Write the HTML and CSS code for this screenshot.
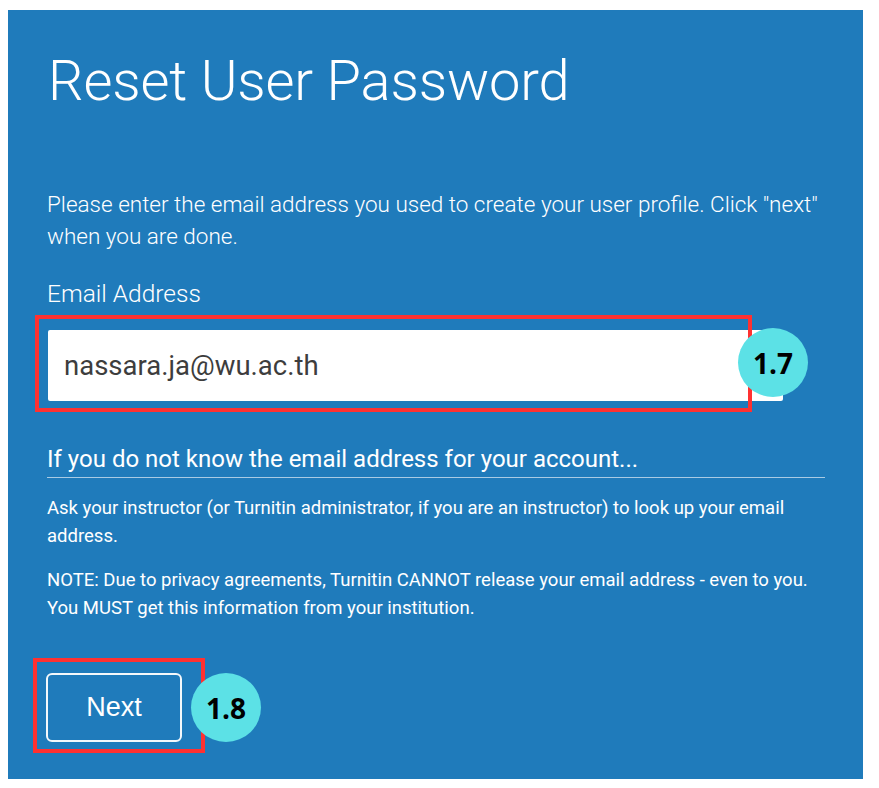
FILE: index.html
```html
<!DOCTYPE html>
<html lang="en">
<head>
<meta charset="utf-8">
<title>Reset User Password</title>
<link rel="stylesheet" href="styles.css">
</head>
<body>
<main class="panel">
  <h1 class="title">Reset User Password</h1>
  <p class="intro">Please enter the email address you used to create your user profile. Click "next" when you are done.</p>
  <label class="field-label" for="email">Email Address</label>
  <div class="field-wrap">
    <input class="field" id="email" type="text" value="nassara.ja@wu.ac.th">
    <span class="mark mark-field" aria-hidden="true"></span>
    <span class="badge badge-field">1.7</span>
  </div>
  <h2 class="subhead">If you do not know the email address for your account...</h2>
  <p class="note">Ask your instructor (or Turnitin administrator, if you are an instructor) to look up your email address.</p>
  <p class="note">NOTE: Due to privacy agreements, Turnitin CANNOT release your email address - even to you. You MUST get this information from your institution.</p>
  <div class="actions">
    <div class="btn-wrap">
      <button class="btn" type="button">Next</button>
      <span class="mark mark-btn" aria-hidden="true"></span>
    </div>
    <span class="badge badge-btn">1.8</span>
  </div>
</main>
</body>
</html>
```
FILE: styles.css
```css
html, body {
  margin: 0;
  padding: 0;
  background: #ffffff;
}

body {
  font-family: Roboto, "Liberation Sans", sans-serif;
  width: 879px;
  height: 788px;
  overflow: hidden;
}

.panel {
  box-sizing: border-box;
  margin: 10px 0 0 8px;
  width: 855px;
  height: 769px;
  background: #1f7bbb;
  color: #ffffff;
  padding: 37px 38px 0 39px;
  display: flex;
  flex-direction: column;
  align-items: flex-start;
}

.title {
  margin: 0 0 0 1px;
  font-weight: 300;
  font-size: 56px;
  line-height: 68px;
  letter-spacing: -0.15px;
}

.intro {
  margin: 73px 0 0;
  font-weight: 300;
  font-size: 22.5px;
  line-height: 32px;
  max-width: 790px;
}

.field-label {
  margin: 27px 0 0;
  font-weight: 300;
  font-size: 24.5px;
  line-height: 30px;
}

.field-wrap {
  position: relative;
  margin-top: 21px;
  margin-left: 1px;
}

.field {
  display: block;
  box-sizing: border-box;
  width: 735px;
  height: 71px;
  border: none;
  border-radius: 2px;
  background: #ffffff;
  padding: 0 16px;
  font-family: Roboto, "Liberation Sans", sans-serif;
  font-size: 27.5px;
  color: #3d3d3d;
  outline: none;
}

.mark {
  position: absolute;
  box-sizing: border-box;
  border: 4px solid #ff3131;
  pointer-events: none;
}

.mark-field {
  left: -13px;
  top: -15px;
  right: 31px;
  bottom: -11px;
}

.badge {
  width: 70px;
  height: 69px;
  border-radius: 50%;
  background: #5ce1e6;
  color: #000000;
  font-family: "Open Sans", "Noto Sans", sans-serif;
  font-weight: 700;
  font-size: 28px;
  display: flex;
  align-items: center;
  justify-content: center;
  position: relative;
  z-index: 2;
}

.badge-field {
  position: absolute;
  right: -25px;
  top: -2px;
}

.subhead {
  align-self: stretch;
  margin: 43px 0 0;
  padding-bottom: 3px;
  border-bottom: 1px solid #a9cbe4;
  font-weight: 400;
  font-size: 24px;
  line-height: 30px;
}

.note {
  margin: 16px 0 0;
  font-weight: 400;
  font-size: 18.5px;
  line-height: 28px;
  max-width: 790px;
}

.note + .note {
  margin-top: 16px;
}

.actions {
  margin-top: 51px;
  margin-left: -1px;
  display: flex;
  align-items: center;
}

.btn-wrap {
  position: relative;
}

.btn {
  display: block;
  box-sizing: border-box;
  width: 136px;
  height: 69px;
  border: 2px solid #f4f8fb;
  border-radius: 6px;
  background: transparent;
  color: #ffffff;
  font-family: "Liberation Sans", Arial, sans-serif;
  font-size: 27px;
  padding: 0;
}

.mark-btn {
  left: -13px;
  top: -15px;
  right: -23px;
  bottom: -11px;
}

.badge-btn {
  margin-left: 9px;
}
```
